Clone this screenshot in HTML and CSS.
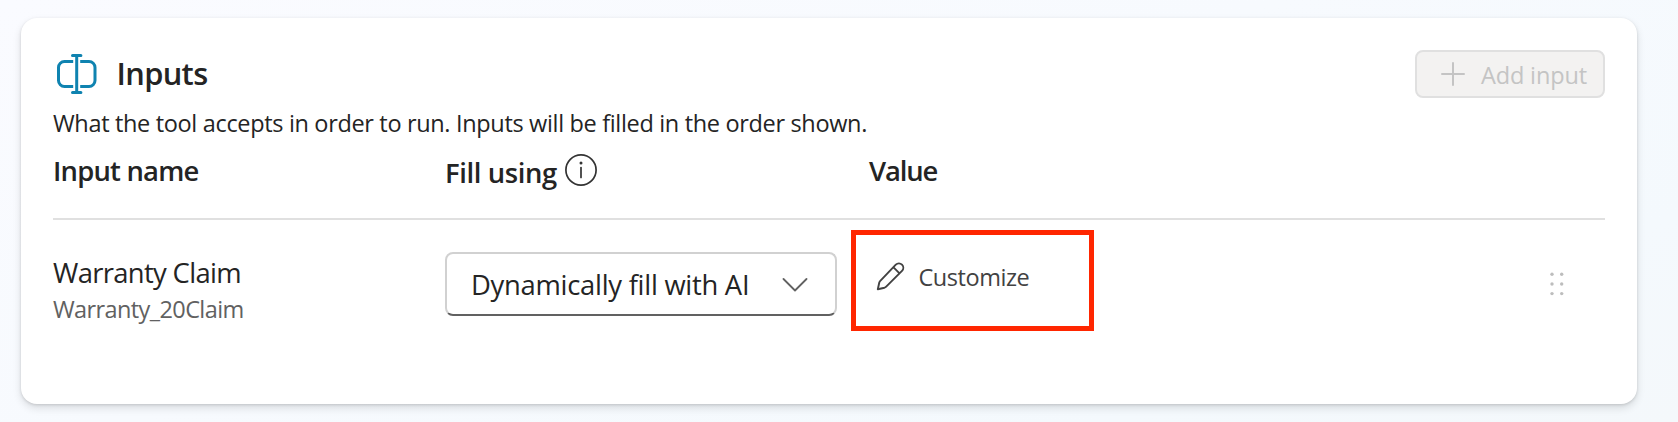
FILE: index.html
```html
<!DOCTYPE html>
<html lang="en">
<head>
<meta charset="utf-8">
<title>Inputs</title>
<link rel="stylesheet" href="styles.css">
</head>
<body>
<main class="card">
  <header class="card-header">
    <svg class="icon-inputs" width="40" height="40" viewBox="0 0 40 40" fill="none" stroke="#0f83b0" stroke-width="3">
      <path d="M16.2 7.5H7.5a6 6 0 0 0-6 6v13a6 6 0 0 0 6 6h8.700M23.200 7.500h8.800a6 6 0 0 1 6 6v13a6 6 0 0 1-6 6h-8.800"/>
      <path d="M19.700 1.500v37M15.500 1.500h8.400M15.500 38.500h8.400" stroke-linecap="round"/>
    </svg>
    <h1 class="title">Inputs</h1>
    <button class="add-button" disabled>
      <svg width="24" height="24" viewBox="0 0 24 24" stroke="#c4c4c4" stroke-width="2" stroke-linecap="round"><path d="M12 1v22M1 12h22"/></svg>
      <span class="add-label">Add input</span>
    </button>
  </header>
  <p class="description">What the tool accepts in order to run. Inputs will be filled in the order shown.</p>
  <div class="row row-head">
    <div class="column-title name-title">Input name</div>
    <div class="column-title fill-title"><span>Fill using</span>
      <svg width="32" height="32" viewBox="0 0 32 32" fill="none" stroke="#333" stroke-width="1.700"><circle cx="16" cy="16" r="15.100"/><path d="M16 13.500v10" stroke-linecap="round"/><circle cx="16" cy="9" r="1.500" fill="#333" stroke="none"/></svg>
    </div>
    <div class="column-title value-title">Value</div>
  </div>
  <div class="row row-body">
    <div>
      <div class="input-name">Warranty Claim</div>
      <div class="input-id">Warranty_20Claim</div>
    </div>
    <div class="select">
      <span>Dynamically fill with AI</span>
      <svg class="icon-chevron" width="26" height="14" viewBox="0 0 26 14" fill="none" stroke="#616161" stroke-width="1.800" stroke-linecap="round" stroke-linejoin="round"><path d="M1.500 1 13 12.500 24.500 1"/></svg>
    </div>
    <div class="customize">
      <svg class="icon-edit" width="30" height="30" viewBox="0 0 30 30" fill="none" stroke="#424242" stroke-width="1.900" stroke-linejoin="round"><path d="M19.800 3.700a4.350 4.350 0 0 1 6.200 6.200L10.200 25.700c-.5.500-1 .8-1.700 1L1.800 28.200l1.500-6.700c.2-.7.500-1.200 1-1.700ZM17.300 6.200l6.200 6.200"/></svg>
      <span>Customize</span>
      <div class="highlight"></div>
    </div>
    <svg class="drag-handle" width="14" height="24" viewBox="0 0 14 24" fill="#bdbdbd"><circle cx="2" cy="2.300" r="1.700"/><circle cx="11.700" cy="2.300" r="1.700"/><circle cx="2" cy="12" r="1.700"/><circle cx="11.700" cy="12" r="1.700"/><circle cx="2" cy="21.600" r="1.700"/><circle cx="11.700" cy="21.600" r="1.700"/></svg>
  </div>
</main>
</body>
</html>
```
FILE: styles.css
```css
* { box-sizing: border-box; }
body {
  margin: 0;
  height: 422px;
  overflow: hidden;
  padding: 18px 41px 18px 21px;
  background: linear-gradient(160deg, #fafbff 0%, #f7fafe 45%, #f4f9fd 80%, #f4f8fb 100%);
  font-family: "Open Sans", "Noto Sans", sans-serif;
  color: #242424;
}
.card {
  width: 1616px;
  height: 386px;
  padding: 32px;
  background: #fff;
  border-radius: 16px;
  box-shadow: 0 1px 3px rgba(0, 0, 0, .13), 0 4px 8px rgba(0, 0, 0, .12);
}
.card-header { display: flex; align-items: center; height: 48px; }
.icon-inputs { margin: -1px 0 0 4px; }
.title {
  margin: 0 auto 2px 19.5px;
  font-size: 30.8px;
  font-weight: 600;
  line-height: 40px;
  letter-spacing: -.65px;
}
.add-button {
  display: flex;
  align-items: center;
  gap: 16px;
  width: 190px;
  height: 48px;
  padding: 0 0 0 24px;
  border: 2px solid #e0e0e0;
  border-radius: 8px;
  background: #f3f2f1;
  color: #c4c4c4;
  font: 400 23.5px/32px "Open Sans", "Noto Sans", sans-serif;
  letter-spacing: -.15px;
}
.add-label { padding-top: 2px; }
.description {
  margin: 9px 0 13px;
  font-size: 23.5px;
  line-height: 32px;
  letter-spacing: -.335px;
  white-space: nowrap;
}
.row { display: grid; grid-template-columns: 392px 424px 1fr auto; }
.row-head { height: 68px; border-bottom: 2px solid #e0e0e0; }
.column-title { font-size: 27.4px; font-weight: 600; line-height: 38px; }
.name-title { letter-spacing: -.78px; }
.fill-title { display: flex; padding-top: 2px; gap: 8px; letter-spacing: -.38px; }
.value-title { letter-spacing: -1.1px; }
.row-body { padding-top: 32px; align-items: start; }
.input-name { font-size: 27.4px; line-height: 42px; letter-spacing: -.66px; }
.input-id { font-size: 23.5px; line-height: 30px; letter-spacing: -.6px; color: #616161; }
.select {
  display: flex;
  align-items: center;
  justify-content: space-between;
  width: 392px;
  height: 64px;
  padding: 0 27px 0 24px;
  border: 2px solid #d1d1d1;
  border-bottom-color: #616161;
  border-radius: 8px;
  font-size: 27.4px;
  letter-spacing: -.27px;
}
.icon-chevron { margin-top: 2px; }
.customize {
  position: relative;
  display: flex;
  align-items: center;
  gap: 12.5px;
  height: 50px;
  padding-left: 7px;
  color: #424242;
  font-size: 23.5px;
  letter-spacing: -.45px;
}
.icon-edit { margin-top: -2px; }
.highlight {
  position: absolute;
  left: -18px;
  top: -22px;
  width: 243px;
  height: 101px;
  border: 5px solid #ff2600;
}
.drag-handle { margin: 20px 41px 0 0; }
```
